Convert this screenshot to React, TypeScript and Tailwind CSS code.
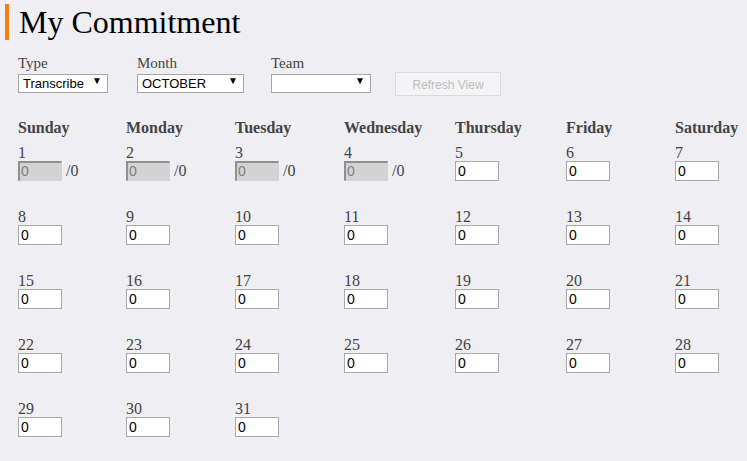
import React from "react";

const days = ["Sunday", "Monday", "Tuesday", "Wednesday", "Thursday", "Friday", "Saturday"];
const colWidths = ["w-[108px]", "w-[109px]", "w-[109px]", "w-[111px]", "w-[111px]", "w-[109px]", "w-[72px]"];

// October starts on Sunday, 31 days
const weeks: number[][] = [];
for (let w = 0; w < 5; w++) {
  const row: number[] = [];
  for (let d = 0; d < 7; d++) {
    const n = w * 7 + d + 1;
    if (n <= 31) row.push(n);
  }
  weeks.push(row);
}

const Select = ({ value, width }: { value: string; width: string }) => (
  <div className={`relative ${width} h-[19px]`}>
    <select
      defaultValue={value}
      className="w-full h-full appearance-none bg-white border border-[#a6a6a6] pl-[4px] text-[13px] leading-[17px] text-black font-['Liberation_Sans',Arial,sans-serif] outline-none"
    >
      <option value={value}>{value}</option>
    </select>
    <span className="pointer-events-none absolute right-[6px] top-[3px] text-[10px] leading-[13px] text-black">▼</span>
  </div>
);

const DayCell = ({ n }: { n: number }) => {
  const locked = n <= 4;
  return (
    <div className="flex flex-col">
      <div className="text-[16px] leading-[16px] h-[16px] text-[#444]">{n}</div>
      <div className="flex items-center h-[20px]">
        {locked ? (
          <input
            disabled
            defaultValue="0"
            className="w-[44px] h-[20px] bg-[#d3d3d3] border-t-2 border-l-2 border-r border-b border-t-[#8f8f8f] border-l-[#8f8f8f] border-r-[#d3d3d3] border-b-[#d3d3d3] px-[1px] text-[14px] text-[#808080] font-['Liberation_Sans',Arial,sans-serif] outline-none"
          />
        ) : (
          <input
            defaultValue="0"
            className="w-[44px] h-[20px] bg-white border border-[#a9a9a9] px-[2px] text-[14px] text-black font-['Liberation_Sans',Arial,sans-serif] outline-none"
          />
        )}
        {locked && <span className="ml-[4px] text-[16px] leading-[20px] text-[#444]">/0</span>}
      </div>
    </div>
  );
};

export default function App() {
  return (
    <div className="w-[747px] h-[461px] bg-[#eeeef3] font-['Liberation_Serif','Times_New_Roman',serif] text-[#444] overflow-hidden">
      <div className="flex items-center pt-[4px] pl-[5px]">
        <div className="w-[4px] h-[36px] bg-[#f57f0e]" />
        <h1 className="ml-[10px] text-[32px] leading-[36px] text-black">My Commitment</h1>
      </div>

      <div className="flex items-start pl-[18px] mt-[16px]">
        <div className="flex flex-col w-[119px]">
          <span className="text-[15px] leading-[15px]">Type</span>
          <Select value="Transcribe" width="w-[90px]" />
        </div>
        <div className="flex flex-col w-[134px]">
          <span className="text-[15px] leading-[15px]">Month</span>
          <Select value="OCTOBER" width="w-[107px]" />
        </div>
        <div className="flex flex-col w-[124px]">
          <span className="text-[15px] leading-[15px]">Team</span>
          <Select value="" width="w-[100px]" />
        </div>
        <button
          disabled
          className="mt-[16px] w-[106px] h-[24px] bg-[#f4f4f6] border border-[#dcdcdc] pt-[2px] text-[12px] text-[#bcbcbc] font-['Liberation_Sans',Arial,sans-serif]"
        >
          Refresh View
        </button>
      </div>

      <div className="pl-[18px] mt-[23px]">
        <div className="flex">
          {days.map((d, i) => (
            <div key={d} className={`${colWidths[i]} text-[16px] leading-[18px] font-bold text-[#444]`}>
              {d}
            </div>
          ))}
        </div>
        <div className="flex flex-col gap-[28px] mt-[8px]">
          {weeks.map((row, wi) => (
            <div key={wi} className="flex">
              {row.map((n, i) => (
                <div key={n} className={colWidths[i]}>
                  <DayCell n={n} />
                </div>
              ))}
            </div>
          ))}
        </div>
      </div>
    </div>
  );
}
